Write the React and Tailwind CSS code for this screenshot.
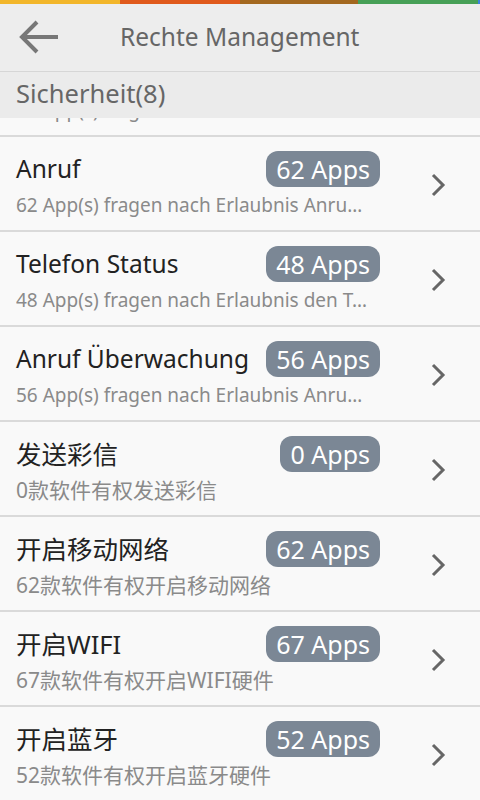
import React from "react";

const rows = [
  { title: "Kontakte lesen", count: 58, sub: "58 App(s) fragen nach Erlaubnis Kontakte..." },
  { title: "Anruf", count: 62, sub: "62 App(s) fragen nach Erlaubnis Anrufe zu tätigen" },
  { title: "Telefon Status", count: 48, sub: "48 App(s) fragen nach Erlaubnis den Telefonstatus zu lesen" },
  { title: "Anruf Überwachung", count: 56, sub: "56 App(s) fragen nach Erlaubnis Anrufe zu überwachen" },
  { title: "发送彩信", count: 0, sub: "0款软件有权发送彩信", cjk: true },
  { title: "开启移动网络", count: 62, sub: "62款软件有权开启移动网络", cjk: true },
  { title: "开启WIFI", count: 67, sub: "67款软件有权开启WIFI硬件", cjk: true },
  { title: "开启蓝牙", count: 52, sub: "52款软件有权开启蓝牙硬件", cjk: true },
];

function Row({ title, count, sub, cjk }) {
  return (
    <div className="border-b-2 border-[#dadada]">
      <div className="h-[93px] flex bg-[#f9f9f9]">
        <div className="w-[380px] pl-4 pt-[14px] min-w-0">
          <div className="h-9 flex items-center justify-between">
            <span className={cjk ? "text-[25.5px] leading-9 text-[#222]" : "text-[24.5px] leading-9 text-[#222]"}>{title}</span>
            <span className="h-9 px-[10px] rounded-[12px] bg-[#7b8795] text-white text-[25px] leading-9">
              {count} Apps
            </span>
          </div>
          <div className={cjk ? "mt-[6px] text-[21px] leading-6 text-[#8a8a8a] truncate pr-1" : "mt-[6px] text-[19px] leading-6 text-[#8a8a8a] truncate pr-3"}>
            {sub}
          </div>
        </div>
        <div className="flex-1 flex items-center pl-[50px] pt-[2px]">
          <svg width="18" height="26" viewBox="0 0 18 26">
            <path d="M3 3 L13 13 L3 23" fill="none" stroke="#666" strokeWidth="3" />
          </svg>
        </div>
      </div>
    </div>
  );
}

export default function App() {
  return (
    <div className="w-[480px] h-[800px] overflow-hidden flex flex-col bg-[#f9f9f9]" style={{ fontFamily: "'Noto Sans', 'Noto Sans CJK SC', sans-serif" }}>
      <div className="h-1 flex shrink-0">
        <div className="w-[120px] bg-[#f2b62a]" />
        <div className="w-[120px] bg-[#e05a1c]" />
        <div className="w-[118px] bg-[#a3681f]" />
        <div className="w-[120px] bg-[#47a057]" />
        <div className="flex-1 bg-[#3b82e0]" />
      </div>
      <div className="h-[68px] shrink-0 flex items-center bg-[#ededed] border-b border-[#d6d6d6]">
        <svg className="ml-[18px]" width="42" height="36" viewBox="0 0 42 36">
          <path d="M4 17 H40 M19 2 L4 17 L19 32" fill="none" stroke="#777" strokeWidth="4" />
        </svg>
        <span className="ml-[60px] text-[24.5px] text-[#666]">Rechte Management</span>
      </div>
      <div className="h-[46px] shrink-0 flex items-center pl-[16px] pb-[3px] bg-[#ebebeb] text-[25.5px] text-[#666]">
        Sicherheit(8)
      </div>
      <div className="flex-1 overflow-hidden">
        <div className="-mt-[76px]">
          {rows.map((r, i) => (
            <Row key={i} {...r} />
          ))}
        </div>
      </div>
    </div>
  );
}
